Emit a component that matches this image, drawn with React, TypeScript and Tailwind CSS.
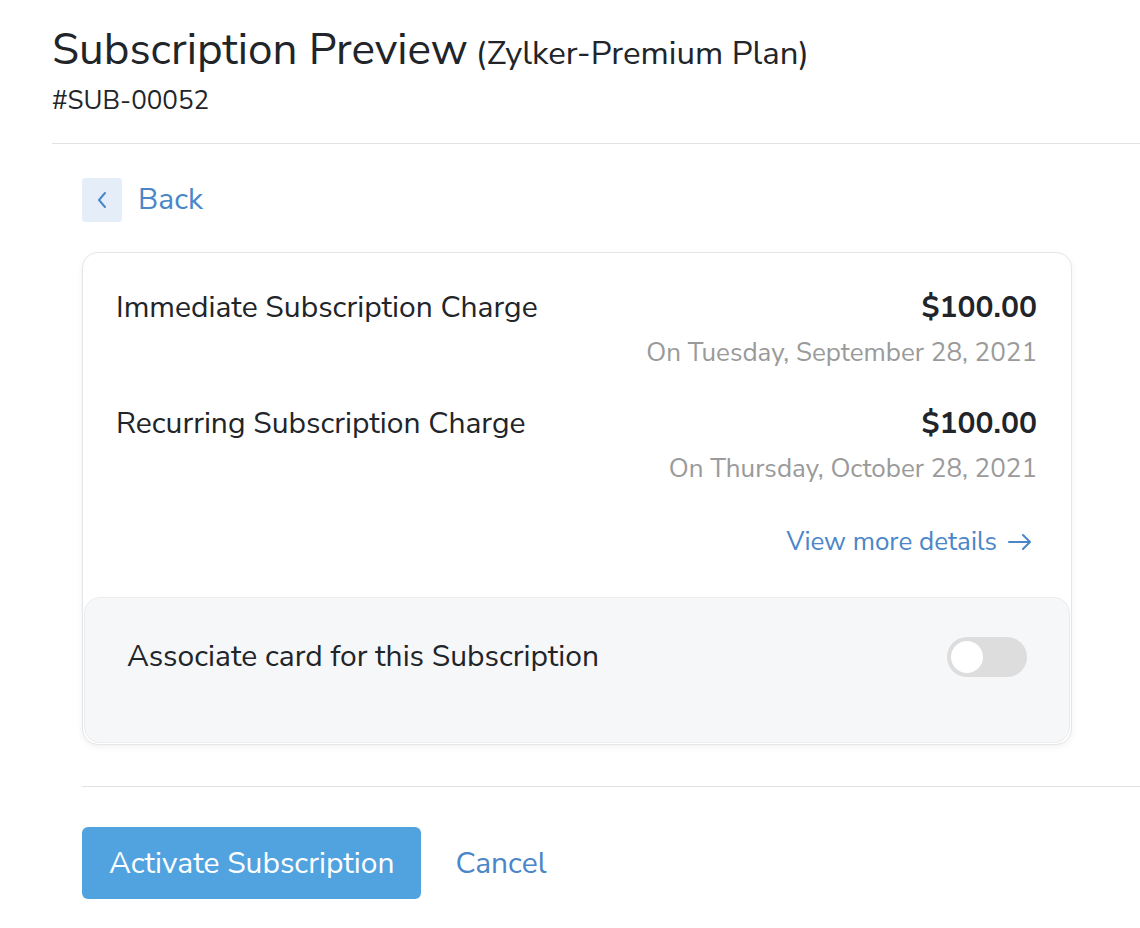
import { useState } from 'react';

const font = { fontFamily: '"Nunito Sans", "Open Sans", Lato, sans-serif' };

function Toggle() {
  const [on, setOn] = useState(false);
  return (
    <button
      onClick={() => setOn(!on)}
      className={`w-[80px] h-[40px] rounded-full p-[4px] flex items-center ${on ? 'bg-[#51a3e0] justify-end' : 'bg-[#dddddd] justify-start'}`}
    >
      <span className="block w-[32px] h-[32px] rounded-full bg-white" />
    </button>
  );
}

function ChargeRow({ label, amount, date }: { label: string; amount: string; date: string }) {
  return (
    <div className="flex flex-col">
      <div className="flex items-center justify-between h-[34px]">
        <span className="text-[30px] leading-[34px] text-[#212529]">{label}</span>
        <span className="text-[30px] leading-[34px] font-bold text-[#212529]">{amount}</span>
      </div>
      <div className="flex justify-end mt-[13px] h-[30px] items-center">
        <span className="text-[26px] leading-[30px] text-[#9a9a9a]">{date}</span>
      </div>
    </div>
  );
}

export default function App() {
  return (
    <div className="min-h-screen bg-white pl-[52px] pt-[26px]" style={font}>
      {/* Header */}
      <div className="flex items-baseline gap-[8px] h-[48px]">
        <h1 className="text-[44px] text-[#212529] leading-[48px]">Subscription Preview</h1>
        <span className="text-[33px] leading-[48px] text-[#212529]">(Zylker-Premium Plan)</span>
      </div>
      <p className="text-[26px] text-[#212529] leading-[30px] mt-[12px]">#SUB-00052</p>
      <div className="border-t border-[#e2e2e2] mt-[27px]" />

      <div className="pl-[30px]">
        {/* Back */}
        <div className="flex items-center gap-[16px] mt-[34px]">
          <div className="w-[40px] h-[44px] rounded-[4px] bg-[#e4edf8] flex items-center justify-center">
            <svg width="14" height="20" viewBox="0 0 14 20" fill="none" stroke="#4a86c8" strokeWidth="2" strokeLinecap="round" strokeLinejoin="round">
              <path d="M10 3 L4 10 L10 17" />
            </svg>
          </div>
          <span className="text-[30px] leading-[34px] text-[#4a86c8]">Back</span>
        </div>

        {/* Card */}
        <div className="w-[990px] mt-[30px] rounded-[16px] border border-[#e6e6e6] bg-white shadow-[0_2px_6px_rgba(0,0,0,0.06)]">
          <div className="pl-[33px] pr-[34px] pt-[38px]">
            <ChargeRow label="Immediate Subscription Charge" amount="$100.00" date="On Tuesday, September 28, 2021" />
            <div className="mt-[39px]">
              <ChargeRow label="Recurring Subscription Charge" amount="$100.00" date="On Thursday, October 28, 2021" />
            </div>
            <div className="flex justify-end mt-[43px]">
              <a className="flex items-center gap-[10px] text-[26px] leading-[30px] text-[#4a86c8] h-[30px] pr-[4px]">
                View more details
                <svg width="26" height="18" viewBox="0 0 26 18" fill="none" stroke="#4a86c8" strokeWidth="2" strokeLinecap="round" strokeLinejoin="round">
                  <path d="M2 9 H23 M16 2 L23 9 L16 16" />
                </svg>
              </a>
            </div>
          </div>
          <div className="mt-[40px] mx-[1px] mb-[1px] rounded-[16px] border border-[#ececec] bg-[#f6f7f9] pl-[42px] pr-[42px] pt-[39px] pb-[65px] flex items-center justify-between">
            <span className="text-[30px] leading-[34px] text-[#212529]">Associate card for this Subscription</span>
            <Toggle />
          </div>
        </div>

        <div className="border-t border-[#e2e2e2] mt-[41px]" />

        {/* Actions */}
        <div className="flex items-center gap-[34px] mt-[40px]">
          <button className="h-[72px] px-[27px] rounded-[6px] bg-[#51a3e0] text-white text-[30px]">
            Activate Subscription
          </button>
          <button className="text-[30px] text-[#4a86c8]">Cancel</button>
        </div>
      </div>
    </div>
  );
}
